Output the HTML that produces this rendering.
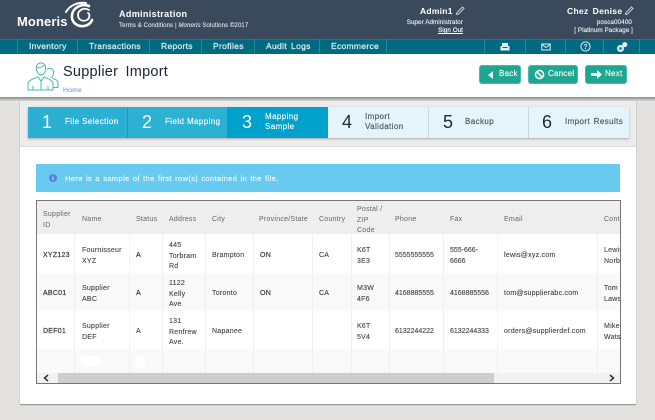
<!DOCTYPE html>
<html><head><meta charset="utf-8">
<style>
html,body{margin:0;padding:0}
body{width:655px;height:420px;overflow:hidden;position:relative;background:#e3e2e0;font-family:"Liberation Sans",sans-serif}
div,span,svg{position:absolute}
.t{white-space:nowrap}
#hd{left:0;top:0;width:655px;height:39px;background:#3a4a5c}
#nav{left:0;top:39px;width:655px;height:15px;background:#006b80;border-top:1px solid #0a7f93;box-sizing:border-box}
.ni{top:41px;color:#dcebef;font-size:8.5px;letter-spacing:.3px;-webkit-text-stroke:.25px #dcebef;white-space:nowrap;line-height:11px}
.nd{top:39px;width:1px;height:14px;background:#2d8598}
#wh{left:0;top:54px;width:655px;height:43px;background:#fff}
#sh{left:0;top:97px;width:655px;height:4px;background:linear-gradient(#8a8a8a,#d8d8d6)}
#panel{left:20px;top:97px;width:616px;height:307px;background:#fff;box-shadow:0 1px 1px #888}
#ptop{left:20px;top:100px;width:616px;height:47px;background:#ececec;border-bottom:1px solid #e0e0e0;box-sizing:border-box}
.btn{top:65px;height:19px;background:#1fa691;border-radius:3px;border:1px solid #4bb9a8;box-sizing:border-box;color:#e8f6f3;font-size:8px;-webkit-text-stroke:.2px #e8f6f3;letter-spacing:.25px;line-height:16px}
.st{top:107px;height:31px;box-sizing:border-box}
.num{font-size:18px;line-height:31px;top:107px;white-space:nowrap}
.sl{font-size:8px;letter-spacing:.4px;line-height:10px;white-space:nowrap;-webkit-text-stroke:.2px currentColor}
#strip{left:28px;top:107px;width:601px;height:31px;box-shadow:0 1px 2px #aaa}
#alert{left:36px;top:164px;width:584px;height:28px;background:#69caf0}
#tb{left:36px;top:200px;width:585px;height:184px;border:1px solid #777;box-sizing:border-box;background:#fff;overflow:hidden}
.r{left:0;width:583px}
.v{width:1px;background:#f0f0f0}
.c{font-size:7px;letter-spacing:.25px;line-height:10.5px;color:#444;white-space:nowrap;-webkit-text-stroke:.12px #444;margin-top:2px}
.h{color:#666;-webkit-text-stroke:0}
.n{letter-spacing:0}
.b{-webkit-text-stroke:.25px #444}
</style></head><body>
<div id="hd"></div>
<div class="t" style="left:17px;top:14px;color:#fff;font-size:13px;font-weight:bold;letter-spacing:.1px;line-height:16px">Moneris</div>
<svg style="left:64px;top:1px" width="31" height="28" viewBox="0 0 31 28" fill="none" stroke="#fff" stroke-linecap="round"><path d="M2 11C6 4 14 1 22 2" stroke-width="2"/><path d="M25 5C17 2 9 7 8 14C7 21 13 26 20 25C24 24.500 27 22 28 19" stroke-width="2.600"/><path d="M25 9C20 6 14 9 14 14C14 19 19 21 23 19C26 17 26 13 24 12" stroke-width="1.800"/></svg>
<div class="t" style="left:119px;top:8px;color:#fff;font-size:9px;font-weight:bold;letter-spacing:.35px;line-height:12px">Administration</div>
<div class="t" style="left:119px;top:21px;color:#d5dbe0;font-size:6px;letter-spacing:.12px;line-height:10px;-webkit-text-stroke:.15px #d5dbe0">Terms &amp; Conditions | <i>Moneris</i> Solutions ©2017</div>
<div class="t" style="left:420px;top:6px;color:#fff;font-size:8.5px;font-weight:bold;letter-spacing:.25px;line-height:11px">Admin1</div>
<svg style="left:455px;top:6px" width="10" height="10" viewBox="0 0 10 10" fill="none" stroke="#c5ccd2" stroke-width="1"><path d="M1.5 8.5L2 6.5L7.5 1L9 2.5L3.5 8L1.5 8.5Z"/></svg>
<div class="t" style="right:192px;top:18px;color:#e8ebee;font-size:6.2px;-webkit-text-stroke:.15px #e8ebee;line-height:9px;letter-spacing:.1px">Super Administrator</div>
<div class="t" style="right:192px;top:26px;color:#fff;font-size:6.2px;-webkit-text-stroke:.15px #fff;line-height:9px;text-decoration:underline;letter-spacing:.1px">Sign Out</div>
<div class="t" style="left:567px;top:6px;color:#fff;font-size:8.5px;font-weight:bold;letter-spacing:.3px;word-spacing:1.5px;line-height:11px">Chez Denise</div>
<svg style="left:624px;top:6px" width="10" height="10" viewBox="0 0 10 10" fill="none" stroke="#c5ccd2" stroke-width="1"><path d="M1.5 8.5L2 6.5L7.5 1L9 2.5L3.5 8L1.5 8.5Z"/></svg>
<div class="t" style="right:23px;top:18px;color:#e8ebee;font-size:6.2px;-webkit-text-stroke:.15px #e8ebee;line-height:9px;letter-spacing:.15px">posca00400</div>
<div class="t" style="right:22px;top:26px;color:#e8ebee;font-size:6.2px;-webkit-text-stroke:.15px #e8ebee;line-height:9px;letter-spacing:.1px">[ Platinum Package ]</div>

<div id="nav"></div>
<div class="nd" style="left:17px"></div><div class="nd" style="left:77px"></div><div class="nd" style="left:149px"></div><div class="nd" style="left:201px"></div><div class="nd" style="left:254px"></div><div class="nd" style="left:319px"></div><div class="nd" style="left:386px"></div><div class="nd" style="left:484px"></div><div class="nd" style="left:525px"></div><div class="nd" style="left:565px"></div><div class="nd" style="left:603px"></div><div class="nd" style="left:639px"></div>
<div class="ni" style="left:29px">Inventory</div><div class="ni" style="left:89px">Transactions</div><div class="ni" style="left:161px">Reports</div><div class="ni" style="left:213px">Profiles</div><div class="ni" style="left:266px;word-spacing:1.5px">Audit Logs</div><div class="ni" style="left:331px">Ecommerce</div>
<svg style="left:500px;top:42px" width="10" height="10" viewBox="0 0 10 10"><path d="M2 1H8V4H9.5V8.5H.5V4H2Z" fill="#e3eef1"/><path d="M2.5 5.5H7.5" stroke="#006b80"/></svg>
<svg style="left:541px;top:43px" width="10" height="8" viewBox="0 0 10 8" fill="none" stroke="#e3eef1"><rect x=".8" y="1" width="8.4" height="6"/><path d="M1 1.5L5 4.5L9 1.5"/></svg>
<svg style="left:580px;top:41px" width="11" height="11" viewBox="0 0 11 11" fill="none"><circle cx="5.5" cy="5.5" r="4.6" stroke="#e3eef1"/><text x="5.5" y="8" font-size="7" font-weight="bold" fill="#e3eef1" text-anchor="middle" font-family="Liberation Sans">?</text></svg>
<svg style="left:616px;top:41px" width="12" height="12" viewBox="0 0 12 12"><circle cx="4.5" cy="7.5" r="3.6" fill="#d5e4e8"/><circle cx="8.8" cy="3.6" r="2.5" fill="#eef5f7"/><circle cx="4.5" cy="7.5" r="1.2" fill="#006b80"/></svg>

<div id="wh"></div>
<svg style="left:27px;top:62px" width="32" height="29" viewBox="0 0 32 29" fill="none" stroke="#4cb9a5" stroke-width="1"><path d="M14 1C10.500 1 9 3.500 9.300 7C9.700 10.500 12 13 14 13C16 13 18.300 10.500 18.700 7C19 3.500 17.500 1 14 1Z"/><path d="M9.500 6C13 6 15.500 5 17 3"/><path d="M1 28V22C1 18.500 6 17 10.500 15L14 19L17.500 15C22 17 26 18.500 26 22V28Z"/><path d="M14 19V28M6 24V28M21 24V28"/><path d="M20 7.500C22 5.500 25.500 6 26.500 9C27 12 25.500 15.500 23.500 16"/><path d="M26 16.500C29 17.500 31 18.500 31 21V25.500H26.500"/></svg>
<div class="t" style="left:63px;top:64px;color:#1a2433;font-size:14.500px;letter-spacing:.25px;word-spacing:3px;line-height:17px">Supplier Import</div>
<div class="t" style="left:63px;top:86px;color:#5d89c7;font-size:6.8px;line-height:9px;letter-spacing:.2px">Home</div>
<div class="btn" style="left:479px;width:42px"><svg style="left:8px;top:5px" width="6" height="8" viewBox="0 0 6 8"><path d="M5 0V8L0 4Z" fill="#eef9f7"/></svg><span class="t" style="left:19px;top:0">Back</span></div>
<div class="btn" style="left:528px;width:50px"><svg style="left:5px;top:3px" width="11" height="11" viewBox="0 0 11 11" fill="none" stroke="#eef9f7" stroke-width="1.700"><circle cx="5.500" cy="5.500" r="4"/><path d="M2.500 2.500L8.500 8.500"/></svg><span class="t" style="left:19px;top:0">Cancel</span></div>
<div class="btn" style="left:585px;width:42px"><svg style="left:5px;top:4px" width="11" height="9" viewBox="0 0 11 9"><path d="M0 3H6V0L11 4.500L6 9V6H0Z" fill="#eef9f7"/></svg><span class="t" style="left:19px;top:0">Next</span></div>

<div id="panel"></div>
<div id="ptop"></div>
<div id="sh"></div>

<div id="strip"></div>
<div class="st" style="left:28px;width:100px;background:#2bb0d4;border-right:1px solid #1f98b9"></div>
<div class="st" style="left:128px;width:100px;background:#2db1d3;border-right:1px solid #1f98b9"></div>
<div class="st" style="left:228px;width:100px;background:#00a2cc"></div>
<div class="st" style="left:328px;width:101px;background:#e5f4fa;border-right:1px solid #c8d8df"></div>
<div class="st" style="left:429px;width:100px;background:#e5f4fa;border-right:1px solid #c8d8df"></div>
<div class="st" style="left:529px;width:100px;background:#e5f4fa"></div>
<div class="num" style="left:42px;color:#fff">1</div><div class="sl" style="left:65px;top:117px;color:#e6f6fb">File Selection</div>
<div class="num" style="left:142px;color:#fff">2</div><div class="sl" style="left:165px;top:117px;color:#e6f6fb">Field Mapping</div>
<div class="num" style="left:242px;color:#fff">3</div><div class="sl" style="left:265px;top:112px;color:#e6f6fb">Mapping<br>Sample</div>
<div class="num" style="left:342px;color:#1b2a38">4</div><div class="sl" style="left:365px;top:112px;color:#4f5d68">Import<br>Validation</div>
<div class="num" style="left:443px;color:#1b2a38">5</div><div class="sl" style="left:465px;top:117px;color:#4f5d68">Backup</div>
<div class="num" style="left:542px;color:#1b2a38">6</div><div class="sl" style="left:565px;top:117px;color:#4f5d68;word-spacing:1px">Import Results</div>

<div id="alert"></div>
<svg style="left:49px;top:174px" width="8" height="8" viewBox="0 0 8 8"><circle cx="4" cy="4" r="4" fill="#4f86dc"/><rect x="3.500" y="3.300" width="1" height="3" fill="#cfe0f7"/><rect x="3.500" y="1.600" width="1" height="1" fill="#cfe0f7"/></svg>
<div class="t" style="left:65px;top:173px;color:#eaf8fd;font-size:7.500px;letter-spacing:.37px;word-spacing:.8px;line-height:11px;-webkit-text-stroke:.15px #eaf8fd">Here is a sample of the first row(s) contained in the file.</div>

<div id="tb">
<div class="r" style="top:0;height:33px;background:#eee"></div>
<div class="r" style="top:33px;height:39px;background:#fff"></div>
<div class="r" style="top:72px;height:38px;background:#f9f9f9"></div>
<div class="r" style="top:110px;height:38px;background:#fff"></div>
<div class="r" style="top:148px;height:24px;background:#f9f9f9"></div>
<div class="v" style="left:37px;top:33px;height:139px"></div><div class="v" style="left:92px;top:33px;height:139px"></div><div class="v" style="left:125px;top:33px;height:139px"></div><div class="v" style="left:168px;top:33px;height:139px"></div><div class="v" style="left:216px;top:33px;height:139px"></div><div class="v" style="left:275px;top:33px;height:139px"></div><div class="v" style="left:314px;top:33px;height:139px"></div><div class="v" style="left:352px;top:33px;height:139px"></div><div class="v" style="left:406px;top:33px;height:139px"></div><div class="v" style="left:460px;top:33px;height:139px"></div><div class="v" style="left:560px;top:33px;height:139px"></div>

<div class="c h" style="left:6px;top:7px">Supplier<br>ID</div><div class="c h" style="left:45px;top:12px">Name</div><div class="c h" style="left:99px;top:12px">Status</div><div class="c h" style="left:132px;top:12px">Address</div><div class="c h" style="left:175px;top:12px">City</div><div class="c h" style="left:222px;top:12px">Province/State</div><div class="c h" style="left:282px;top:12px">Country</div><div class="c h" style="left:320px;top:2px">Postal /<br>ZIP<br>Code</div><div class="c h" style="left:358px;top:12px">Phone</div><div class="c h" style="left:413px;top:12px">Fax</div><div class="c h" style="left:467px;top:12px">Email</div><div class="c h" style="left:567px;top:12px">Contact</div>

<div class="c b" style="left:6px;top:48px">XYZ123</div><div class="c" style="left:45px;top:43px">Fournisseur<br>XYZ</div><div class="c b" style="left:99px;top:48px">A</div><div class="c" style="left:132px;top:38px">445<br>Torbram<br>Rd</div><div class="c" style="left:175px;top:48px">Brampton</div><div class="c b" style="left:223px;top:48px">ON</div><div class="c" style="left:282px;top:48px">CA</div><div class="c" style="left:320px;top:43px">K6T<br>3E3</div><div class="c n" style="left:358px;top:48px">5555555555</div><div class="c n" style="left:413px;top:43px">555-666-<br>6666</div><div class="c" style="left:467px;top:48px">lewis@xyz.com</div><div class="c" style="left:567px;top:43px">Lewis<br>Norbert</div>

<div class="c b" style="left:6px;top:86px">ABC01</div><div class="c" style="left:45px;top:81px">Supplier<br>ABC</div><div class="c b" style="left:99px;top:86px">A</div><div class="c" style="left:132px;top:76px">1122<br>Kelly<br>Ave</div><div class="c" style="left:175px;top:86px">Toronto</div><div class="c b" style="left:223px;top:86px">ON</div><div class="c" style="left:282px;top:86px">CA</div><div class="c" style="left:320px;top:81px">M3W<br>4F6</div><div class="c n" style="left:358px;top:86px">4168885555</div><div class="c n" style="left:413px;top:86px">4168885556</div><div class="c" style="left:467px;top:86px">tom@supplierabc.com</div><div class="c" style="left:567px;top:81px">Tom<br>Lawson</div>

<div class="c b" style="left:6px;top:124px">DEF01</div><div class="c" style="left:45px;top:119px">Supplier<br>DEF</div><div class="c" style="left:99px;top:124px">A</div><div class="c" style="left:132px;top:114px">131<br>Renfrew<br>Ave.</div><div class="c" style="left:175px;top:124px">Napanee</div><div class="c" style="left:320px;top:119px">K6T<br>5V4</div><div class="c n" style="left:358px;top:124px">6132244222</div><div class="c n" style="left:413px;top:124px">6132244333</div><div class="c" style="left:467px;top:124px">orders@supplierdef.com</div><div class="c" style="left:567px;top:119px">Mike<br>Watson</div>

<div style="left:43px;top:155px;width:20px;height:11px;background:#fff;border-radius:6px"></div>
<div style="left:97px;top:154px;width:11px;height:13px;background:#fff;border-radius:5px"></div>

<div class="r" style="top:172px;height:10px;background:#f1f1f1"></div>
<div style="left:21px;top:172px;width:436px;height:10px;background:#cdcdcd"></div>
<svg style="left:5px;top:173px" width="9" height="8" viewBox="0 0 9 8" fill="none" stroke="#333" stroke-width="1.500"><path d="M6 1L2.500 4L6 7"/></svg>
<svg style="left:570px;top:173px" width="9" height="8" viewBox="0 0 9 8" fill="none" stroke="#333" stroke-width="1.500"><path d="M3 1L6.500 4L3 7"/></svg>
</div>
</body></html>
